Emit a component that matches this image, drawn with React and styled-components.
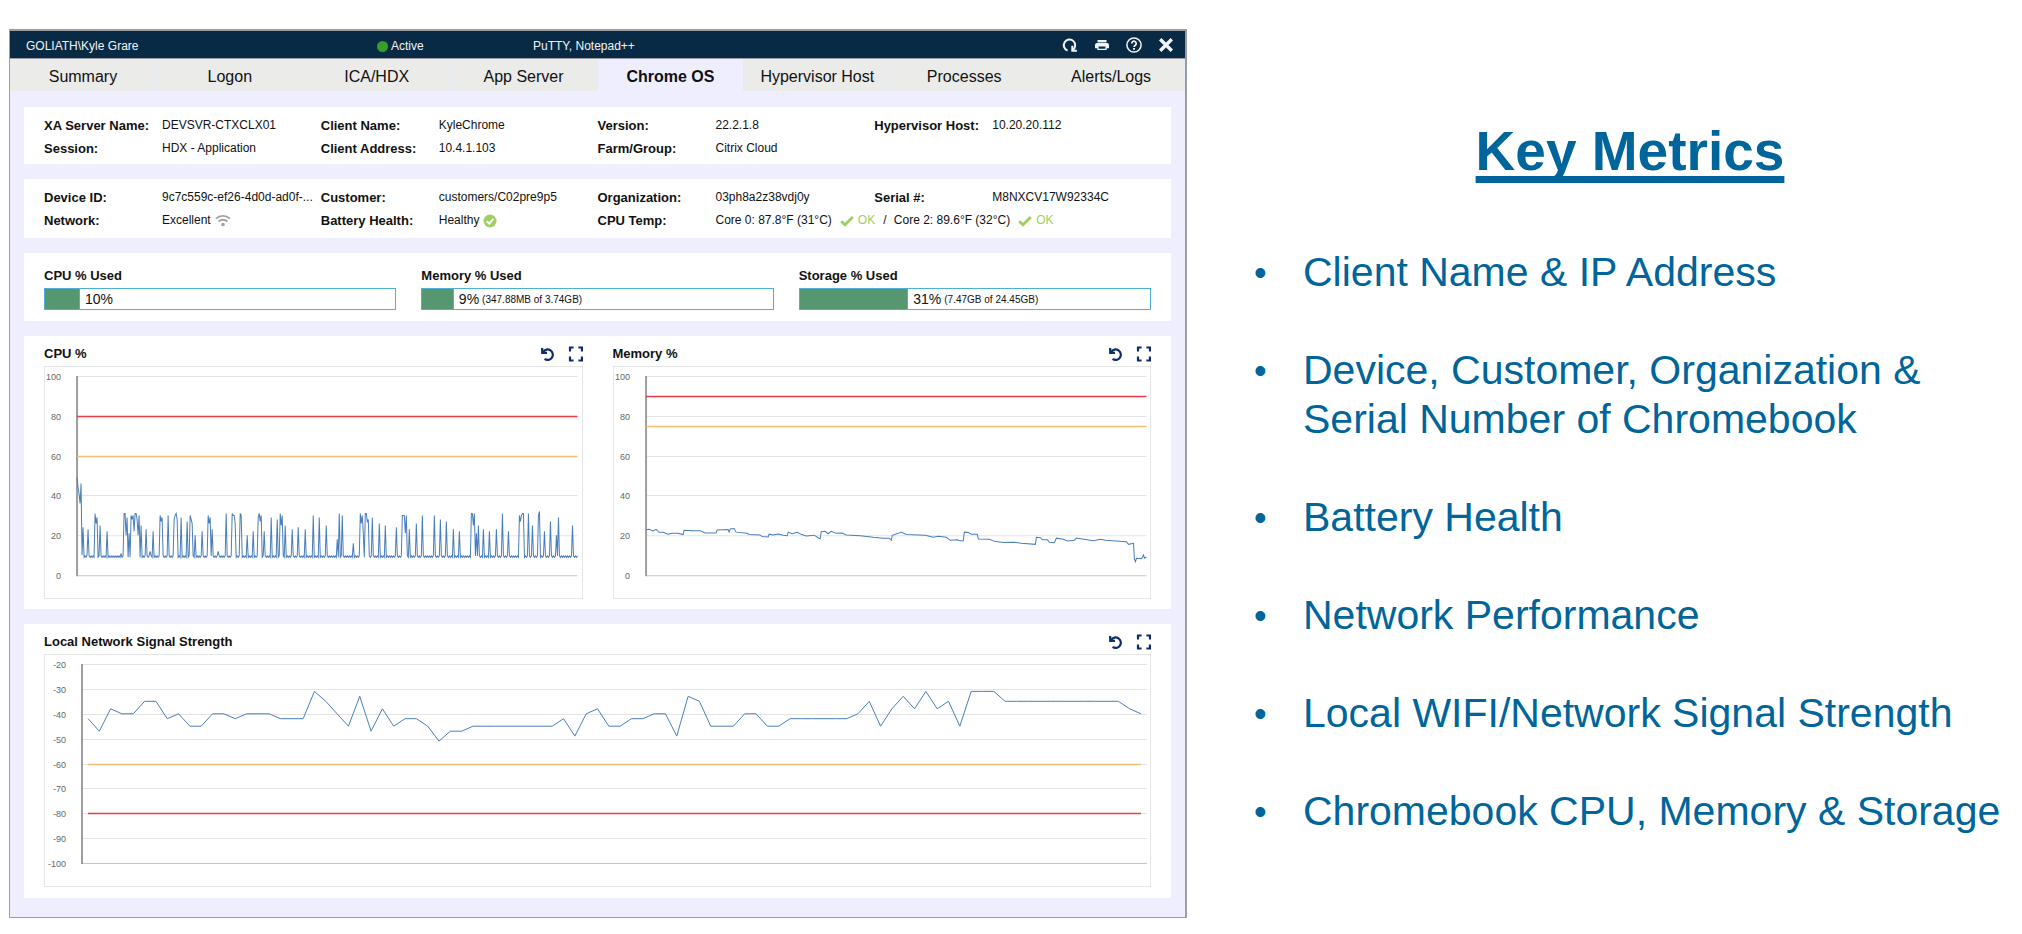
import React, { useState } from 'react';
import styled, { createGlobalStyle } from 'styled-components';

const Colors = {
  navy: '#082a45',
  icon: '#0d2c6c',
  lavender: '#eeeefe',
  tab: '#ebebea',
  border: '#9c9ca4',
  line: '#4a7ebb',
  grid: '#e3e3e3',
  axis: '#9e9e9e',
  red: '#ee3a43',
  orange: '#f2bd77',
  bar: '#55976f',
  barBorder: '#4fb0d6',
  ok: '#9fcf62',
  slide: '#00659b',
};

const GlobalStyle = createGlobalStyle`
  * {
    box-sizing: border-box;
  }
  body {
    margin: 0;
    background: #fff;
    color: #111;
    font-family: "Liberation Sans", Arial, sans-serif;
  }
`;

const Page = styled.div`
  display: grid;
  grid-template-columns: minmax(0, 1178fr) minmax(0, 835fr);
  align-items: start;
  padding: 29px 0 0 9px;
`;

const Window = styled.main`
  border: 1px solid ${Colors.border};
  border-top-width: 2px;
  border-right-width: 2px;
  background: ${Colors.lavender};
`;

const TitleBar = styled.header`
  display: grid;
  grid-template-columns: 351fr 156fr 529fr auto;
  align-items: center;
  height: 28px;
  padding: 0 11px 0 16px;
  border-bottom: 1px solid ${Colors.border};
  background: ${Colors.navy};
  color: #f2f5f8;
  font-size: 12px;
  line-height: 16px;
  > span {
    padding-top: 3px;
  }
`;

const Status = styled.span`
  display: flex;
  align-items: center;
  gap: 3px;
  &::before {
    content: '';
    width: 11px;
    height: 11px;
    border-radius: 50%;
    background: #33a02c;
  }
`;

const Actions = styled.div`
  display: flex;
  align-items: center;
  gap: ${({ $gap }) => $gap}px;
`;

const IconButton = styled.button`
  display: block;
  width: 16px;
  height: 16px;
  padding: 0;
  border: 0;
  background: none;
  color: inherit;
  cursor: pointer;
  svg {
    display: block;
  }
`;

const Tabs = styled.nav`
  display: grid;
  grid-template-columns: repeat(8, 1fr);
`;

const Tab = styled.button`
  height: 32px;
  padding: 4px 0 0;
  border: 0;
  border-right: 1px solid #e4ebf1;
  background: ${({ $active }) => ($active ? Colors.lavender : Colors.tab)};
  color: #111;
  font-family: inherit;
  font-size: 16px;
  font-weight: ${({ $active }) => ($active ? 700 : 400)};
  white-space: nowrap;
  cursor: pointer;
`;

const Body = styled.div`
  display: grid;
  gap: 15px;
  padding: 16px 14px 19px 14px;
`;

const Card = styled.section`
  padding: ${({ $pad }) => $pad};
  background: #fff;
`;

const Facts = styled.dl`
  display: grid;
  grid-template-columns: repeat(4, 1fr);
  margin: 0;
`;

const Fact = styled.div`
  display: flex;
  grid-column: span ${({ $span }) => $span || 1};
  height: 23px;
  line-height: 23px;
  white-space: nowrap;
  dt {
    flex: 0 0 118px;
    font-size: 13px;
    font-weight: 700;
  }
  dd {
    display: flex;
    align-items: center;
    gap: 4px;
    min-width: 0;
    margin: 0;
    font-size: 12px;
  }
`;

const Clip = styled.span`
  overflow: hidden;
  text-overflow: ellipsis;
`;

const Ok = styled.span`
  display: flex;
  align-items: center;
  gap: 4px;
  padding: 0 4px;
  color: ${Colors.ok};
`;

const Heading = styled.h2`
  margin: 0;
  font-size: 13px;
  line-height: 20px;
`;

const Usage = styled.div`
  display: grid;
  grid-template-columns: repeat(3, 1fr);
  gap: 25px;
`;

const Meter = styled.div`
  display: flex;
  align-items: center;
  height: 22px;
  margin-top: 2px;
  border: 1px solid ${Colors.barBorder};
  font-size: 14px;
  small {
    margin-left: 3px;
    font-size: 10px;
  }
`;

const Fill = styled.div`
  height: 100%;
  margin-right: 5px;
  border-right: 1px solid ${Colors.barBorder};
  background: ${Colors.bar};
`;

const ChartPair = styled.div`
  display: grid;
  grid-template-columns: repeat(2, 1fr);
  gap: 30px;
`;

const ChartHead = styled.div`
  display: flex;
  align-items: center;
  justify-content: space-between;
  height: 25px;
  color: ${Colors.icon};
  h2 {
    color: #111;
  }
`;

const Plot = styled.svg`
  display: block;
  width: 100%;
  height: auto;
  border: 1px solid #e6e6e6;
  text {
    fill: #666;
    font-size: 9px;
    text-anchor: end;
  }
`;

const Notes = styled.aside`
  padding: 89px 16px 0 67px;
  color: ${Colors.slide};
  h1 {
    margin: 0;
    font-size: 55px;
    line-height: 66px;
    text-align: center;
    text-decoration: underline;
    text-decoration-thickness: 7px;
    text-underline-offset: 6px;
    text-decoration-skip-ink: none;
  }
  ul {
    display: grid;
    gap: 49px;
    margin: 0;
    padding: 64px 0 0;
    list-style: none;
  }
  li {
    display: grid;
    grid-template-columns: 49px 1fr;
    font-size: 41px;
    line-height: 49px;
  }
  li::before {
    content: '•';
    font-size: 36px;
  }
`;

const RefreshIcon = () => (
  <svg width="16" height="16" viewBox="0 0 16 16" fill="none" stroke="currentColor" strokeWidth="2">
    <path d="M5.600 13.600A5.700 5.700 0 1 1 10.600 13" />
    <path d="M10.300 8.700v5h4.600" />
  </svg>
);

const PrintIcon = () => (
  <svg width="16" height="16" viewBox="0 0 16 16" fill="currentColor">
    <path d="M3.500 3h9v2.400h-9z" />
    <path fillRule="evenodd" d="M3 6h10a2 2 0 0 1 2 2v3.200h-2.300V13H3.300v-1.800H1V8a2 2 0 0 1 2-2zm1.600 3.500v2.200h6.800V9.500z" />
  </svg>
);

const HelpIcon = () => (
  <svg width="16" height="16" viewBox="0 0 16 16" fill="none" stroke="currentColor">
    <circle cx="8" cy="8" r="7.100" strokeWidth="1.500" />
    <path d="M5.800 6.500a2.200 2.200 0 1 1 3.500 1.700c-.9.600-1.300.9-1.300 1.900" strokeWidth="1.700" />
    <path d="M8 11v1.700" strokeWidth="1.900" />
  </svg>
);

const CloseIcon = () => (
  <svg width="16" height="16" viewBox="0 0 16 16" stroke="currentColor" strokeWidth="3.400">
    <path d="M2.200 2.200l11.600 11.600M13.800 2.200L2.200 13.800" />
  </svg>
);

const UndoIcon = () => (
  <svg width="16" height="16" viewBox="0 0 16 16" fill="none" stroke="currentColor" strokeWidth="2.200">
    <path d="M4.200 6A5.200 5.200 0 1 1 5.600 12.900" />
    <path d="M3.200 2v4.800h4.800" />
  </svg>
);

const ExpandIcon = () => (
  <svg width="16" height="16" viewBox="0 0 16 16" fill="none" stroke="currentColor" strokeWidth="2.200">
    <path d="M3 5.500V1.500h3.600M11.400 1.500H15v4M15 10.500v4h-3.600M6.600 14.500H3v-4" />
  </svg>
);

const WifiIcon = () => (
  <svg width="16" height="14" viewBox="0 0 17 14" fill="none" stroke="#a3a3a3" strokeWidth="1.900">
    <path d="M1 4.500a11 11 0 0 1 15 0M3.800 7.500a7 7 0 0 1 9.400 0" />
    <circle cx="8.500" cy="10.700" r="1" fill="#a3a3a3" />
  </svg>
);

const HealthyIcon = () => (
  <svg width="14" height="14" viewBox="0 0 14 14" fill="none">
    <circle cx="7" cy="7" r="6.500" fill={Colors.ok} />
    <path d="M3.800 7.200L6.200 9.600L10.400 4.900" stroke="#fff" strokeWidth="2" />
  </svg>
);

const TickIcon = () => (
  <svg width="14" height="12" viewBox="0 0 14 12" fill="none" stroke={Colors.ok} strokeWidth="2.800">
    <path d="M1.200 6.200L5 9.800L12.800 2" />
  </svg>
);

// CPU is idle at 9-10% with short bursts: [start, samples]
const cpuBursts = [
  [9, [9, 10, 23]], [18, [31, 26, 29]], [23, [25]], [30, [22]], [44, [11]],
  [47, [31, 31, 20, 29]], [52, [21]], [54, [30, 28, 30, 22]], [58, [31, 31, 28, 20, 30]],
  [64, [25]], [69, [23]], [73, [12]], [76, [22]], [83, [30, 27, 29]], [91, [30]],
  [97, [28, 30, 31, 28]], [104, [29]], [110, [27]], [113, [30, 28, 26]], [118, [20]],
  [125, [22]], [131, [30, 26, 29]], [135, [23]], [141, [12]], [149, [31]],
  [155, [31, 30, 30, 26]], [163, [31, 30]], [170, [20]], [176, [22]],
  [181, [29, 31, 27, 30]], [187, [22]], [194, [29]], [200, [28]], [203, [31, 25, 30]],
  [208, [25]], [215, [23]], [221, [24]], [228, [23]], [236, [30]], [242, [29]],
  [249, [25]], [260, [18]], [262, [31]], [265, [30]], [276, [16]], [283, [31, 26, 30, 21]],
  [288, [31, 31, 27, 28]], [295, [29]], [302, [26]], [308, [25]], [319, [24]],
  [325, [30, 30, 30, 21, 30]], [332, [23]], [339, [26]], [345, [30]], [357, [30]],
  [363, [28]], [369, [27]], [376, [23]], [382, [22]], [394, [31, 31, 25, 31]],
  [399, [21]], [401, [25]], [406, [23]], [412, [22]], [419, [23]], [425, [31]],
  [431, [22]], [442, [30, 27, 30, 31, 31]], [451, [31]], [455, [25]], [461, [30, 32]],
  [467, [22]], [473, [27]], [479, [20]], [481, [29]], [495, [25]],
];

const cpuData = Array.from({ length: 501 }, (_, x) => [x, x % 2 ? 9 : 9.7]);
[49, 44, 41, 36, 46, 10, 24].forEach((v, x) => { cpuData[x][1] = v; });
cpuBursts.forEach(([start, values]) => {
  values.forEach((v, i) => { cpuData[start + i][1] = v; });
});

const memoryData = [
  [0, 22.8], [3, 23], [7, 22.2], [10, 23], [13, 21.5], [17, 21.5], [22, 20.6], [26, 21],
  [32, 21], [37, 20.4], [38, 22.5], [46, 22.3], [54, 22.3], [59, 21.2], [70, 21.2],
  [71, 22.7], [82, 22.9], [83, 21.6], [84, 23.2], [88, 23.4], [90, 21.6], [101, 21],
  [103, 20.4], [114, 20.2], [116, 19.4], [122, 19.2], [123, 20.6], [127, 20.2],
  [132, 20.7], [137, 20], [141, 19.8], [142, 21.6], [146, 20.8], [151, 21.5], [155, 20.5],
  [160, 19.7], [168, 20.1], [172, 18.8], [174, 18.3], [175, 21.8], [179, 22], [182, 20.8],
  [185, 22], [190, 21], [196, 21.2], [200, 20.2], [214, 19.8], [227, 19], [237, 18.5],
  [243, 18.6], [245, 17.6], [246, 20], [252, 21], [255, 21.6], [260, 20.4], [279, 20],
  [287, 19], [292, 19.5], [300, 19], [304, 17.5], [311, 17.8], [313, 17.3], [317, 17.3],
  [318, 21.6], [322, 21.4], [325, 20.6], [331, 20.5], [332, 18.2], [343, 18], [348, 17],
  [357, 16.4], [367, 16.6], [375, 16], [389, 15.5], [390, 19], [394, 18.8], [396, 17.8],
  [401, 17.8], [403, 16.5], [408, 16.3], [410, 18.6], [417, 18], [421, 17.2], [428, 17.6],
  [430, 18.7], [436, 18.2], [447, 17.3], [454, 18], [459, 17.6], [480, 16.8], [482, 15.5],
  [487, 16], [488, 8], [489, 6.8], [490, 8.5], [495, 8.3], [497, 10.2], [498, 8.5], [500, 9.2],
];

const signal = [
  -42, -47, -38, -40, -40, -35, -35, -42, -40, -45, -45, -40, -40, -42, -40, -40, -40,
  -42, -42, -42, -31, -35, -40, -45, -33, -47, -38, -45, -42, -42, -45, -51, -47, -47,
  -45, -45, -45, -45, -45, -45, -45, -45, -42, -49, -40, -38, -45, -45, -42, -42, -40,
  -40, -49, -33, -35, -45, -45, -45, -40, -40, -45, -45, -42, -42, -42, -42, -42, -42,
  -40, -35, -45, -38, -33, -38, -31, -38, -35, -45, -31, -31, -31, -35, -35, -35, -35,
  -35, -35, -35, -35, -35, -35, -35, -38, -40,
];
const signalData = signal.map((v, i) => [6 + (i * 1053) / (signal.length - 1), v]);

function Chart({ title, width, left, right, max, min, step, data, inset = 0, limits }) {
  const top = 9;
  const bottom = 208;
  const y = (v) => top + ((max - v) * (bottom - top)) / (max - min);
  const snap = (v) => Math.round(y(v)) + 0.5;
  const ticks = [];
  for (let v = max; v >= min; v -= step) ticks.push(v);

  return (
    <div>
      <ChartHead>
        <Heading>{title}</Heading>
        <Actions $gap={12}>
          <IconButton aria-label={`Reset ${title}`}><UndoIcon /></IconButton>
          <IconButton aria-label={`Expand ${title}`}><ExpandIcon /></IconButton>
        </Actions>
      </ChartHead>
      <Plot viewBox={`0 0 ${width} 231`} role="img" aria-label={title}>
        {ticks.map((v) => (
          <g key={v}>
            <path d={`M${left} ${snap(v)}H${right}`} stroke={v === min ? '#c6c6c6' : Colors.grid} />
            <text x={left - 16} y={snap(v) + 3}>{v}</text>
          </g>
        ))}
        <path d={`M${left} ${top}V${bottom + 1}`} stroke={Colors.axis} strokeWidth="2" />
        {limits.map(([v, color]) => (
          <path key={v} d={`M${left + inset} ${snap(v)}H${right - inset}`} stroke={color} strokeWidth="1.500" />
        ))}
        <polyline
          points={data.map(([x, v]) => `${left + x},${y(v).toFixed(1)}`).join(' ')}
          fill="none"
          stroke={Colors.line}
          strokeWidth="1"
        />
      </Plot>
    </div>
  );
}

const tabs = ['Summary', 'Logon', 'ICA/HDX', 'App Server', 'Chrome OS', 'Hypervisor Host', 'Processes', 'Alerts/Logs'];

const usage = [
  { label: 'CPU % Used', value: 10 },
  { label: 'Memory % Used', value: 9, detail: '(347.88MB of 3.74GB)' },
  { label: 'Storage % Used', value: 31, detail: '(7.47GB of 24.45GB)' },
];

const metrics = [
  'Client Name & IP Address',
  'Device, Customer, Organization & Serial Number of Chromebook',
  'Battery Health',
  'Network Performance',
  'Local WIFI/Network Signal Strength',
  'Chromebook CPU, Memory & Storage',
];

export default function App() {
  const [active, setActive] = useState('Chrome OS');

  return (
    <Page>
      <GlobalStyle />
      <Window>
        <TitleBar>
          <span>GOLIATH\Kyle Grare</span>
          <Status>Active</Status>
          <span>PuTTY, Notepad++</span>
          <Actions $gap={16}>
            <IconButton aria-label="Refresh"><RefreshIcon /></IconButton>
            <IconButton aria-label="Print"><PrintIcon /></IconButton>
            <IconButton aria-label="Help"><HelpIcon /></IconButton>
            <IconButton aria-label="Close"><CloseIcon /></IconButton>
          </Actions>
        </TitleBar>
        <Tabs>
          {tabs.map((tab) => (
            <Tab key={tab} $active={tab === active} onClick={() => setActive(tab)}>{tab}</Tab>
          ))}
        </Tabs>
        <Body>
          <Card $pad="7px 20px 4px">
            <Facts>
              <Fact><dt>XA Server Name:</dt><dd>DEVSVR-CTXCLX01</dd></Fact>
              <Fact><dt>Client Name:</dt><dd>KyleChrome</dd></Fact>
              <Fact><dt>Version:</dt><dd>22.2.1.8</dd></Fact>
              <Fact><dt>Hypervisor Host:</dt><dd>10.20.20.112</dd></Fact>
              <Fact><dt>Session:</dt><dd>HDX - Application</dd></Fact>
              <Fact><dt>Client Address:</dt><dd>10.4.1.103</dd></Fact>
              <Fact><dt>Farm/Group:</dt><dd>Citrix Cloud</dd></Fact>
            </Facts>
          </Card>
          <Card $pad="7px 20px 6px">
            <Facts>
              <Fact><dt>Device ID:</dt><dd><Clip>9c7c559c-ef26-4d0d-ad0f-...</Clip></dd></Fact>
              <Fact><dt>Customer:</dt><dd>customers/C02pre9p5</dd></Fact>
              <Fact><dt>Organization:</dt><dd>03ph8a2z38vdj0y</dd></Fact>
              <Fact><dt>Serial #:</dt><dd>M8NXCV17W92334C</dd></Fact>
              <Fact><dt>Network:</dt><dd>Excellent <WifiIcon /></dd></Fact>
              <Fact><dt>Battery Health:</dt><dd>Healthy <HealthyIcon /></dd></Fact>
              <Fact $span={2}>
                <dt>CPU Temp:</dt>
                <dd>
                  Core 0: 87.8°F (31°C) <Ok><TickIcon />OK</Ok>
                  <span>/</span>
                  <span>&nbsp;Core 2: 89.6°F (32°C)</span> <Ok><TickIcon />OK</Ok>
                </dd>
              </Fact>
            </Facts>
          </Card>
          <Card $pad="13px 20px 11px">
            <Usage>
              {usage.map(({ label, value, detail }) => (
                <div key={label}>
                  <Heading>{label}</Heading>
                  <Meter>
                    <Fill style={{ width: `${value}%` }} />
                    {value}%{detail && <small>{detail}</small>}
                  </Meter>
                </div>
              ))}
            </Usage>
          </Card>
          <Card $pad="5px 20px 10px">
            <ChartPair>
              <Chart
                title="CPU %" width={536} left={32} right={532} max={100} min={0} step={20}
                data={cpuData} limits={[[80, Colors.red], [60, Colors.orange]]}
              />
              <Chart
                title="Memory %" width={536} left={32} right={532} max={100} min={0} step={20}
                data={memoryData} limits={[[90, Colors.red], [75, Colors.orange]]}
              />
            </ChartPair>
          </Card>
          <Card $pad="5px 20px 11px">
            <Chart
              title="Local Network Signal Strength" width={1105} left={37} right={1102} max={-20} min={-100} step={10}
              data={signalData} inset={6} limits={[[-60, Colors.orange], [-80, Colors.red]]}
            />
          </Card>
        </Body>
      </Window>
      <Notes>
        <h1>Key Metrics</h1>
        <ul>
          {metrics.map((metric) => <li key={metric}>{metric}</li>)}
        </ul>
      </Notes>
    </Page>
  );
}
